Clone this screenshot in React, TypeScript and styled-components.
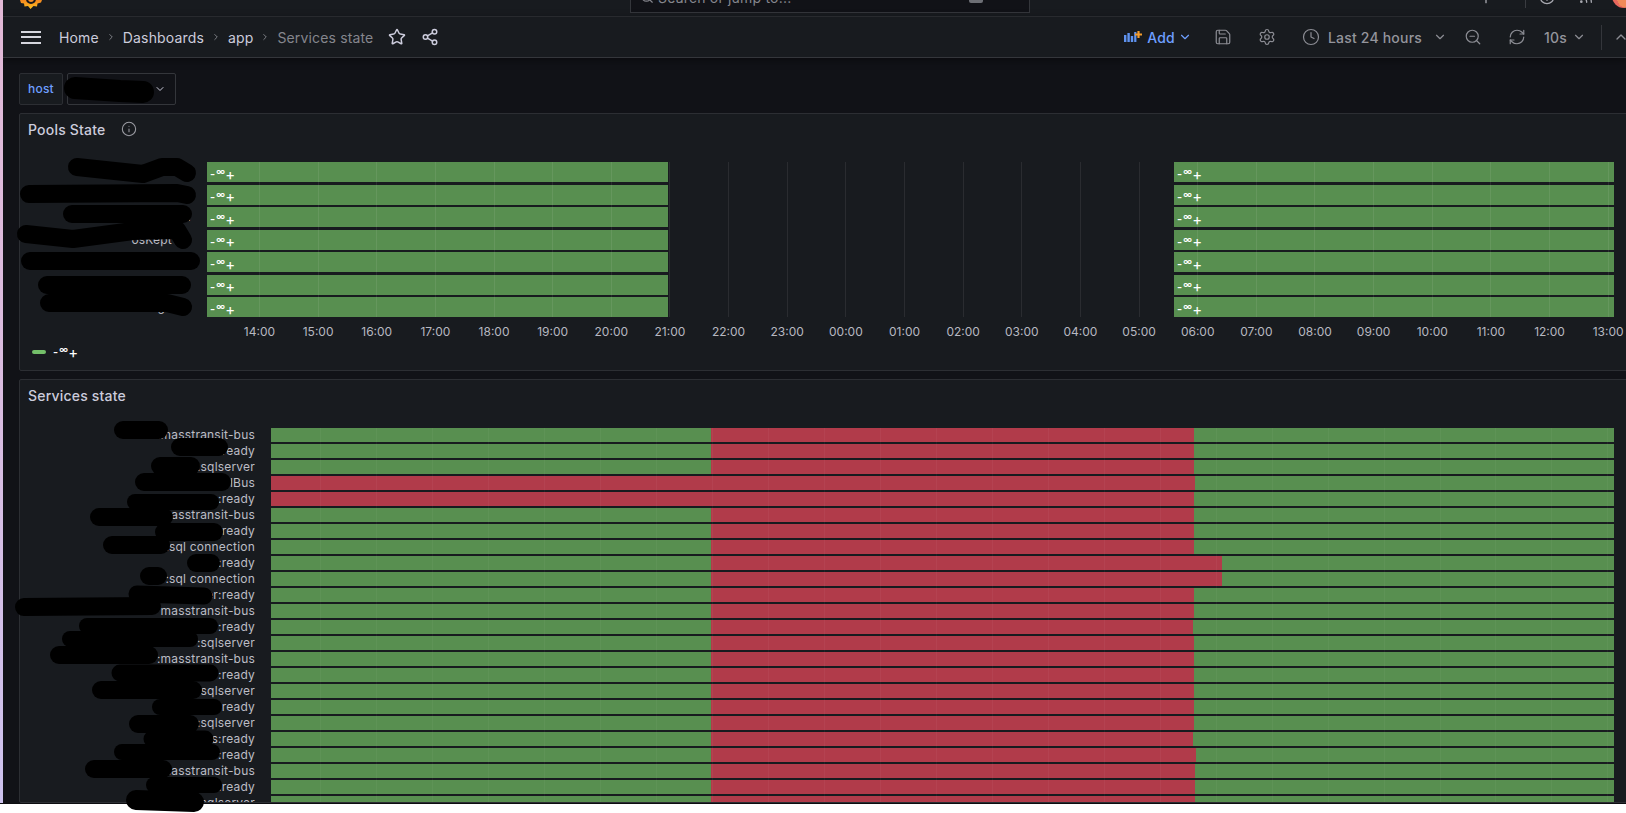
import React from 'react'
import styled, { createGlobalStyle } from 'styled-components'
import {
  ChevronDown,
  ChevronRight,
  ChevronUp,
  CircleHelp,
  Clock,
  Info,
  Plus,
  RefreshCw,
  Rss,
  Save,
  Search,
  Settings,
  Share2,
  Star,
  ZoomOut,
} from 'lucide-react'

const GlobalStyle = createGlobalStyle`
  html, body {
    margin: 0;
    padding: 0;
    background: #ffffff;
    overflow: hidden;
  }
  * {
    box-sizing: border-box;
  }
`

const Screen = styled.div`
  position: relative;
  width: 1626px;
  height: 813px;
  overflow: hidden;
  font-family: Inter, 'Liberation Sans', sans-serif;
  letter-spacing: 0.2px;
`

const Window = styled.div`
  display: flex;
  height: 804px;
  overflow: hidden;
  border-bottom: 1px solid #0c0d10;
`

const DesktopEdge = styled.div`
  flex: 0 0 3px;
  background: linear-gradient(180deg, #e2b9d6 0%, #d9bce0 50%, #cdc2ee 100%);
`

const Main = styled.div`
  flex: 1;
  min-width: 0;
  display: flex;
  flex-direction: column;
  background: #111217;
  overflow: hidden;
`

const TopBar = styled.div`
  flex: 0 0 17px;
  display: grid;
  grid-template-columns: 627px 400px 1fr;
  grid-template-rows: 16px;
  align-items: end;
  background: #181b1f;
  border-bottom: 1px solid #2e3035;
  overflow: hidden;
`

const LogoCell = styled.div`
  display: flex;
  align-items: flex-end;
  padding: 0 0 7px 16px;
  height: 16px;
`

const SearchBox = styled.div`
  display: flex;
  align-items: center;
  gap: 4px;
  height: 32px;
  margin-bottom: 3px;
  padding: 0 8px 0 9px;
  background: #111217;
  border: 1px solid #34363b;
  color: #85868d;
  font-size: 14px;
`

const SearchHint = styled.span`
  margin-left: auto;
  display: flex;
  align-items: center;
  margin-right: 38px;
`

const KeyChip = styled.span`
  width: 14px;
  height: 11px;
  border-radius: 2px;
  background: #6d6f75;
`

const TopRight = styled.div`
  display: flex;
  align-items: flex-end;
  justify-content: flex-end;
  height: 16px;
  margin-right: -10px;
  color: #a8a9b0;
`

const TopItem = styled.span<{ $ml: number; $mb: number }>`
  display: flex;
  margin-left: ${p => p.$ml}px;
  margin-bottom: ${p => p.$mb}px;
`

const TopDivider = styled.span`
  width: 1px;
  height: 8px;
  margin: 0 0 8px 31px;
  background: #3a3c41;
`

const Avatar = styled.span`
  flex: 0 0 24px;
  height: 24px;
  margin: 0 0 8px 18px;
  border-radius: 50%;
  background: radial-gradient(circle at 60% 60%, #f08a5a 0 45%, #e8675d 46% 70%, #7fb069 71%);
`

const NavBar = styled.div`
  flex: 0 0 41px;
  display: flex;
  align-items: center;
  padding-left: 18px;
  background: #181b1f;
  border-bottom: 1px solid #34363b;
  box-shadow: 0 2px 8px rgba(0, 0, 0, 0.45);
  position: relative;
  overflow: hidden;
`

const Burger = styled.span`
  flex: 0 0 20px;
  height: 13px;
  margin-right: 18px;
  border-top: 2px solid #d5d6de;
  border-bottom: 2px solid #d5d6de;
  display: flex;
  align-items: center;

  &::before {
    content: '';
    width: 100%;
    height: 2px;
    background: #d5d6de;
  }
`

const Crumbs = styled.nav`
  display: flex;
  align-items: center;
  gap: 7px;
  font-size: 14px;
  letter-spacing: 0.15px;
  color: #ccccdc;
  white-space: nowrap;
`

const CrumbSep = styled.span`
  display: flex;
  color: #a0a1a8;
  width: 10px;
  justify-content: center;
`

const CurrentCrumb = styled.span`
  color: #85868d;
`

const NavIcon = styled.span`
  display: flex;
  margin-left: 15px;
  color: #ccccdc;
`

const NavTools = styled.div`
  display: flex;
  align-items: center;
  margin-left: auto;
  margin-right: -3px;
  color: #8c8d94;
`

const Tool = styled.span<{ $ml: number }>`
  display: flex;
  align-items: center;
  margin-left: ${p => p.$ml}px;
  white-space: nowrap;
`

const AddChevron = styled(Tool)`
  color: #6e9fff;
`

const ToolText = styled.span<{ $ml: number }>`
  margin-left: ${p => p.$ml}px;
  font-size: 14px;
  font-weight: 500;
  color: #94959c;
  white-space: nowrap;
`

const AddText = styled(ToolText)`
  color: #6e9fff;
`

const ToolDivider = styled.span`
  width: 1px;
  height: 25px;
  margin-left: 15px;
  background: #34363b;
`

const Content = styled.div`
  flex: 1;
  min-height: 0;
  display: flex;
  flex-direction: column;
  gap: 8px;
  padding: 15px 0 0 16px;
`

const VariableRow = styled.div`
  flex: 0 0 32px;
  display: flex;
  gap: 4px;
`

const VariableLabel = styled.div`
  display: flex;
  align-items: center;
  justify-content: center;
  width: 44px;
  padding-bottom: 1px;
  border: 1px solid #2c2e33;
  border-radius: 2px;
  background: #181b1f;
  color: #6e9fff;
  font-size: 12px;
  font-weight: 500;
`

const VariableSelect = styled.div`
  display: flex;
  align-items: center;
  justify-content: flex-end;
  width: 109px;
  padding-right: 9px;
  border: 1px solid #34363b;
  border-radius: 2px;
  background: #111217;
  color: #ccccdc;
`

const Panel = styled.section<{ $grow?: boolean }>`
  flex: ${p => (p.$grow ? '1' : '0 0 258px')};
  min-height: 0;
  margin-right: -10px;
  background: #181b1f;
  border: 1px solid #2c2e33;
  border-radius: 2px;
  overflow: hidden;
`

const PanelHeader = styled.header`
  height: 32px;
  display: flex;
  align-items: center;
  gap: 16px;
  padding: 0 0 2px 8px;
  font-size: 14px;
  font-weight: 500;
  color: #ccccdc;
`

const InfoMark = styled.span`
  display: flex;
  color: #9a9ba2;
`

const Chart = styled.div<{ $width: number }>`
  position: relative;
  margin-top: 16px;
  width: ${p => p.$width}px;
`

const Rows = styled.div<{ $gap: number }>`
  display: flex;
  flex-direction: column;
  gap: ${p => p.$gap}px;
`

const Row = styled.div<{ $labelWidth: number; $height: number }>`
  display: grid;
  grid-template-columns: ${p => p.$labelWidth}px 1fr;
  grid-template-rows: minmax(0, 1fr);
  height: ${p => p.$height}px;
`

const RowLabel = styled.div<{ $inset: number }>`
  padding-right: ${p => p.$inset}px;
  text-align: right;
  font-size: 12px;
  line-height: 14px;
  color: #bcbdc5;
  white-space: nowrap;
  overflow: hidden;
  align-self: center;
`

const Track = styled.div`
  display: flex;
  height: 100%;
`

const Segment = styled.div<{ $color: string }>`
  height: 100%;
  padding-left: 3px;
  background: ${p => p.$color};
  overflow: hidden;
`

const NoValue = styled.span`
  display: inline-flex;
  align-items: center;
  height: 18px;
  color: #ffffff;
  font-size: 11px;
  font-weight: 600;
  letter-spacing: 0;
`

const NoValueInfinity = styled.span`
  margin: -5px 0 0 1px;
  font-size: 9px;
  letter-spacing: -0.5px;
`

const NoValuePlus = styled.span`
  margin: 0 0 0 1px;
  font-size: 15px;
  font-weight: 400;
  line-height: 1;
`

const GridLines = styled.div<{ $labelWidth: number; $step: number; $offset: number }>`
  position: absolute;
  top: 0;
  bottom: 0;
  left: ${p => p.$labelWidth}px;
  right: 0;
  overflow: hidden;
  display: grid;
  grid-template-columns: repeat(24, ${p => p.$step}px);
  padding-left: ${p => p.$offset}px;
  pointer-events: none;
`

const GridCell = styled.div<{ $alpha: number }>`
  display: flex;
  justify-content: center;

  &::after {
    content: '';
    width: 1px;
    background: rgba(255, 255, 255, ${p => p.$alpha});
  }
`

const Axis = styled.div<{ $start: number; $step: number }>`
  display: grid;
  grid-template-columns: repeat(24, ${p => p.$step}px);
  padding-left: ${p => p.$start}px;
  height: 28px;
  align-items: center;
  font-size: 12px;
  letter-spacing: 0;
  color: #b7b8c0;
  white-space: nowrap;
`

const AxisLabel = styled.span`
  text-align: center;
`

const Legend = styled.div`
  display: flex;
  align-items: center;
  gap: 7px;
  padding-left: 12px;
  height: 14px;
  color: #ccccdc;
`

const LegendSwatch = styled.span`
  width: 14px;
  height: 4px;
  border-radius: 2px;
  background: #73bf69;
`

const Scribbles = styled.svg`
  position: absolute;
  top: 0;
  left: 0;
  pointer-events: none;
`

const GREEN = '#588f50'
const RED = '#b13b4a'

const HOURS = [14, 15, 16, 17, 18, 19, 20, 21, 22, 23, 0, 1, 2, 3, 4, 5, 6, 7, 8, 9, 10, 11, 12, 13]

const POOLS_LEFT = 187
const POOLS_WIDTH = 1407
const POOLS_STEP = 58.65
const SERVICES_LEFT = 251
const SERVICES_WIDTH = 1343
const SERVICES_STEP = 55.96

const poolRows = [
  { label: '.', inset: 29 },
  { label: '.', inset: 29 },
  { label: '.', inset: 16 },
  { label: 'osKept', inset: 35 },
  { label: '', inset: 0 },
  { label: '', inset: 0 },
  { label: 'g', inset: 42 },
]

const poolSegments = [
  { width: 461, color: GREEN, filled: true },
  { width: 506, color: 'transparent', filled: false },
  { width: 440, color: GREEN, filled: true },
]

// x position (from the start of the track) where each row leaves / re-enters the red state
const serviceRows = [
  { label: ':masstransit-bus', from: 440, to: 923 },
  { label: ':ready', from: 440, to: 923 },
  { label: ':sqlserver', from: 440, to: 923 },
  { label: 'lBus', from: 0, to: 924 },
  { label: ':ready', from: 0, to: 923 },
  { label: 'masstransit-bus', from: 440, to: 923 },
  { label: ':ready', from: 440, to: 923 },
  { label: ':sql connection', from: 440, to: 923 },
  { label: ':ready', from: 440, to: 951 },
  { label: ':sql connection', from: 440, to: 951 },
  { label: 'er:ready', from: 440, to: 923 },
  { label: 'masstransit-bus', from: 440, to: 923 },
  { label: ':ready', from: 440, to: 922 },
  { label: ':sqlserver', from: 440, to: 923 },
  { label: ':masstransit-bus', from: 440, to: 923 },
  { label: ':ready', from: 440, to: 923 },
  { label: 'sqlserver', from: 440, to: 923 },
  { label: 'ready', from: 440, to: 923 },
  { label: ':sqlserver', from: 440, to: 923 },
  { label: 's:ready', from: 440, to: 922 },
  { label: ':ready', from: 440, to: 925 },
  { label: 'masstransit-bus', from: 440, to: 924 },
  { label: ':ready', from: 440, to: 924 },
  { label: ':sqlserver', from: 440, to: 924 },
]

const redactions = [
  { w: 22, p: '75,88 120,91 143,92' },
  { w: 18, p: '77,167 143,174 162,167 177,167 187,173' },
  { w: 18, p: '29,194 177,193 187,195' },
  { w: 18, p: '72,214 183,214' },
  { w: 18, p: '26,234 73,239 133,231 177,230 183,240' },
  { w: 18, p: '30,261 191,261' },
  { w: 18, p: '47,285 182,285' },
  { w: 18, p: '49,303 167,303 183,307' },
  { w: 18, p: '123,430 159,430' },
  { w: 18, p: '180,447 219,447' },
  { w: 18, p: '160,466 191,466' },
  { w: 18, p: '144,482 222,482' },
  { w: 16, p: '135,502 211,502' },
  { w: 18, p: '99,517 164,517' },
  { w: 18, p: '164,532 214,532' },
  { w: 18, p: '112,545 161,545' },
  { w: 18, p: '196,563 211,563' },
  { w: 18, p: '149,576 158,576' },
  { w: 17, p: '137,594 204,596' },
  { w: 18, p: '24,607 152,606' },
  { w: 16, p: '87,626 210,626' },
  { w: 16, p: '70,639 190,639' },
  { w: 18, p: '59,655 149,655' },
  { w: 17, p: '120,673 210,673' },
  { w: 18, p: '101,690 193,690' },
  { w: 16, p: '160,707 214,707' },
  { w: 18, p: '138,724 190,724' },
  { w: 17, p: '152,739 205,739' },
  { w: 16, p: '122,752 212,752' },
  { w: 18, p: '94,769 163,769' },
  { w: 16, p: '154,785 214,785' },
  { w: 20, p: '136,800 194,802' },
]

const Logo = () => (
  <svg width="24" height="24" viewBox="0 0 24 24">
    <defs>
      <linearGradient id="grafana" x1="0" y1="0" x2="0" y2="1">
        <stop offset="0" stopColor="#f0592a" />
        <stop offset="0.6" stopColor="#f68f1f" />
        <stop offset="1" stopColor="#fcc31e" />
      </linearGradient>
    </defs>
    <path
      d="M1 15 L2 18 L5 18.5 L5.5 21.5 L9 21 L11.5 24 L14.5 21 L18 21.5 L18.5 18.5 L22 17.5 L23 15 L22 10 L12 5 L2 10 Z"
      fill="url(#grafana)"
    />
    <circle cx="12" cy="14" r="5" fill="#17181c" />
    <circle cx="12" cy="14" r="3" fill="#f3902a" />
  </svg>
)

const AddIcon = () => (
  <svg width="18" height="16" viewBox="0 0 18 16">
    <g fill="#5f93f0">
      <rect x="0" y="6" width="2.4" height="7" />
      <rect x="3.4" y="4" width="2.4" height="9" />
      <rect x="6.8" y="7" width="2.4" height="6" />
      <rect x="10.2" y="3" width="2.2" height="10" />
    </g>
    <path d="M14.5 2v7M11 5.5h7" stroke="#f39c2c" strokeWidth="2.2" />
  </svg>
)

const Chevron = () => <ChevronDown size={14} strokeWidth={2} />

const CrumbChevron = () => (
  <CrumbSep>
    <ChevronRight size={14} strokeWidth={1.75} />
  </CrumbSep>
)

const NoValueText = () => (
  <NoValue>
    -<NoValueInfinity>∞</NoValueInfinity>
    <NoValuePlus>+</NoValuePlus>
  </NoValue>
)

const App = () => {
  return (
    <Screen>
      <GlobalStyle />
      <Window>
        <DesktopEdge />
        <Main>
          <TopBar>
            <LogoCell>
              <Logo />
            </LogoCell>
            <SearchBox>
              <Search size={14} />
              <span>Search or jump to...</span>
              <SearchHint>
                <KeyChip />
              </SearchHint>
            </SearchBox>
            <TopRight>
              <TopItem $ml={0} $mb={10}>
                <Plus size={16} />
              </TopItem>
              <TopDivider />
              <TopItem $ml={13} $mb={11}>
                <CircleHelp size={16} />
              </TopItem>
              <TopItem $ml={23} $mb={11}>
                <Rss size={16} />
              </TopItem>
              <Avatar />
            </TopRight>
          </TopBar>

          <NavBar>
            <Burger />
            <Crumbs>
              <span>Home</span>
              <CrumbChevron />
              <span>Dashboards</span>
              <CrumbChevron />
              <span>app</span>
              <CrumbChevron />
              <CurrentCrumb>Services state</CurrentCrumb>
            </Crumbs>
            <NavIcon><Star size={18} /></NavIcon>
            <NavIcon><Share2 size={18} /></NavIcon>
            <NavTools>
              <Tool $ml={0}><AddIcon /></Tool>
              <AddText $ml={5}>Add</AddText>
              <AddChevron $ml={3}><Chevron /></AddChevron>
              <Tool $ml={22}><Save size={18} strokeWidth={1.6} /></Tool>
              <Tool $ml={26}><Settings size={18} strokeWidth={1.6} /></Tool>
              <Tool $ml={26}><Clock size={18} strokeWidth={1.6} /></Tool>
              <ToolText $ml={8}>Last 24 hours</ToolText>
              <Tool $ml={11}><Chevron /></Tool>
              <Tool $ml={17}><ZoomOut size={18} strokeWidth={1.6} /></Tool>
              <Tool $ml={26}><RefreshCw size={18} strokeWidth={1.6} /></Tool>
              <ToolText $ml={18}>10s</ToolText>
              <Tool $ml={5}><Chevron /></Tool>
              <ToolDivider />
              <Tool $ml={11}><ChevronUp size={16} /></Tool>
            </NavTools>
          </NavBar>

          <Content>
            <VariableRow>
              <VariableLabel>host</VariableLabel>
              <VariableSelect><ChevronDown size={12} strokeWidth={2} /></VariableSelect>
            </VariableRow>

            <Panel>
              <PanelHeader>
                Pools State
                <InfoMark><Info size={16} strokeWidth={1.6} /></InfoMark>
              </PanelHeader>
              <Chart $width={POOLS_LEFT + POOLS_WIDTH}>
                <Rows $gap={2.5}>
                  {poolRows.map((row, i) => (
                    <Row key={i} $labelWidth={POOLS_LEFT} $height={20}>
                      <RowLabel $inset={row.inset}>{row.label}</RowLabel>
                      <Track>
                        {poolSegments.map((seg, j) => (
                          <Segment key={j} $color={seg.color} style={{ width: seg.width }}>
                            {seg.filled && <NoValueText />}
                          </Segment>
                        ))}
                      </Track>
                    </Row>
                  ))}
                </Rows>
                <GridLines $labelWidth={POOLS_LEFT} $step={POOLS_STEP} $offset={23.15}>
                  {HOURS.map(h => <GridCell key={h} $alpha={0.08} />)}
                </GridLines>
              </Chart>
              <Axis $start={POOLS_LEFT + 23.15} $step={POOLS_STEP}>
                {HOURS.map(h => (
                  <AxisLabel key={h}>{String(h).padStart(2, '0')}:00</AxisLabel>
                ))}
              </Axis>
              <Legend>
                <LegendSwatch />
                <NoValueText />
              </Legend>
            </Panel>

            <Panel $grow>
              <PanelHeader>Services state</PanelHeader>
              <Chart $width={SERVICES_LEFT + SERVICES_WIDTH}>
                <Rows $gap={2}>
                  {serviceRows.map((row, i) => (
                    <Row key={i} $labelWidth={SERVICES_LEFT} $height={14}>
                      <RowLabel $inset={16}>{row.label}</RowLabel>
                      <Track>
                        {row.from > 0 && <Segment $color={GREEN} style={{ width: row.from }} />}
                        <Segment $color={RED} style={{ width: row.to - row.from }} />
                        <Segment $color={GREEN} style={{ width: SERVICES_WIDTH - row.to }} />
                      </Track>
                    </Row>
                  ))}
                </Rows>
                <GridLines $labelWidth={SERVICES_LEFT} $step={SERVICES_STEP} $offset={22}>
                  {HOURS.map(h => <GridCell key={h} $alpha={0.04} />)}
                </GridLines>
              </Chart>
            </Panel>
          </Content>
        </Main>
      </Window>

      <Scribbles width="1626" height="813" viewBox="0 0 1626 813">
        {redactions.map((r, i) => (
          <polyline
            key={i}
            points={r.p}
            fill="none"
            stroke="#000000"
            strokeWidth={r.w}
            strokeLinecap="round"
            strokeLinejoin="round"
          />
        ))}
      </Scribbles>
    </Screen>
  )
}

export default App
